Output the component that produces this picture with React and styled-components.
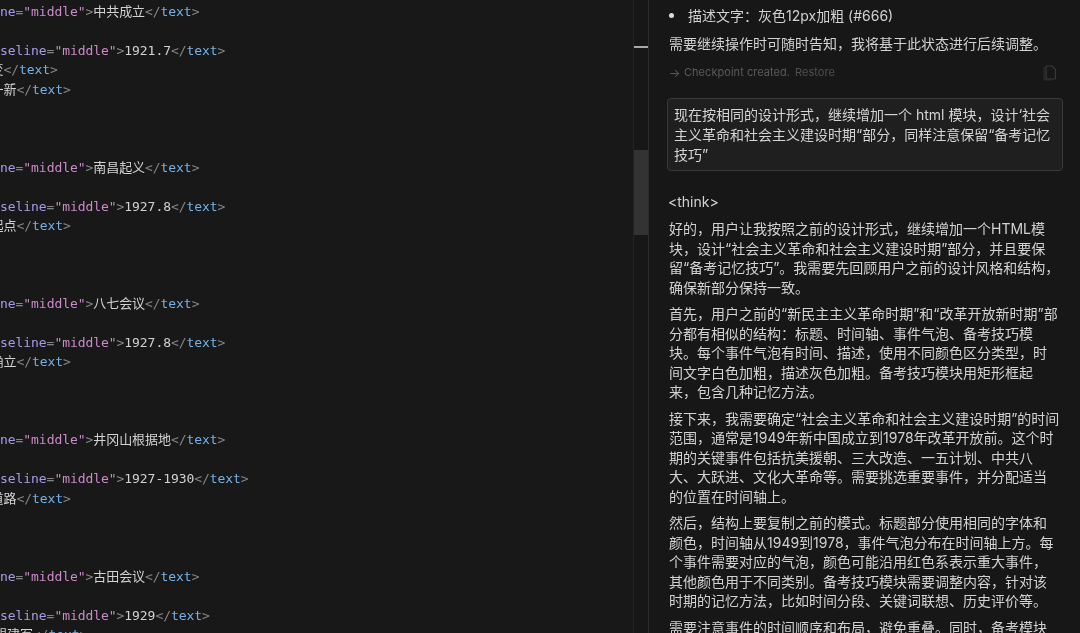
import React from 'react';
import styled, { createGlobalStyle } from 'styled-components';

const GlobalStyle = createGlobalStyle`
html, body {
  margin:0;
  padding:0;
  background:#181818;
  overflow:hidden;
}
`;

const Page = styled.div`
display:flex;
width:1080px;
height:633px;
overflow:hidden;
background:#181818;
filter:blur(0.3px);
`;

const CodePane = styled.div`
width:633px;
height:633px;
flex-shrink:0;
overflow:hidden;
padding-top:2px;
box-sizing:border-box;
font-family:"DejaVu Sans Mono","Noto Sans CJK SC",monospace;
font-size:13px;
letter-spacing:-0.06px;
line-height:19.47px;
color:#d2d2d2;
`;

const CodeLine = styled.div`
height:19.47px;
white-space:pre;
margin-left:${props => props.$clip || 0}px;
`;

const Attr = styled.span`
color:#a59ce6;
`;

const Str = styled.span`
color:#cb8ac8;
`;

const Punct = styled.span`
color:#858585;
`;

const Tag = styled.span`
color:#74b0e6;
`;

const Scrollbar = styled.div`
position:relative;
width:14px;
height:633px;
flex-shrink:0;
background:#171717;
border-left:1px solid #232323;
border-right:1px solid #2b2b2b;
`;

const Thumb = styled.div`
position:absolute;
top:150px;
left:0;
right:0;
height:85px;
background:#333;
`;

const Tick = styled.div`
position:absolute;
top:46px;
left:0;
right:0;
height:2px;
background:#a8a8a8;
`;

const ChatPane = styled.div`
flex:1;
height:633px;
overflow:hidden;
box-sizing:border-box;
padding:5.5px 17px 0 20px;
background:#171717;
font-family:Inter,"Noto Sans CJK SC",sans-serif;
font-size:14px;
line-height:19.5px;
color:#d2d2d2;
`;

const Bullet = styled.div`
display:flex;
align-items:center;
white-space:nowrap;
&::before{
  content:"";
  width:5px;
  height:5px;
  margin:0 14px 0 0;
  border-radius:50%;
  background:#dcdcdc;
}
`;

const Para = styled.p`
margin:0 0 7px;
`;

const Closing = styled(Para)`
margin:9px 0 0;
`;

const TextLine = styled.span`
display:block;
white-space:nowrap;
`;

const Checkpoint = styled.div`
display:flex;
align-items:center;
height:20px;
margin:9px 6px 0 0;
font-size:11px;
letter-spacing:0.04px;
color:#5a5a5a;
`;

const Arrow = styled.span`
width:15px;
font-size:12px;
`;

const Restore = styled.span`
margin-left:5px;
color:#505050;
`;

const CopyIcon = styled.svg`
margin-left:auto;
width:15px;
height:16px;
fill:none;
stroke:#3a3a3a;
stroke-width:1.2;
`;

const UserBox = styled.div`
margin:15px 0 21px -2px;
padding:6px 6px 5px 6px;
background:#1f1f1f;
border:1px solid #3a3a3a;
border-radius:4px;
line-height:20px;
color:#d4d4d4;
`;

const Think = styled.div`
margin:0 0 8px -1px;
`;

const codeRows = [
    { row: 0, kind: 'attr', head: 'ne', value: '中共成立' },
    { row: 2, kind: 'attr', head: 'seline', value: '1921.7' },
    { row: 3, kind: 'tail', clip: -9.5, value: '变' },
    { row: 4, kind: 'tail', clip: -9.5, value: '一新' },
    { row: 8, kind: 'attr', head: 'ne', value: '南昌起义' },
    { row: 10, kind: 'attr', head: 'seline', value: '1927.8' },
    { row: 11, kind: 'tail', clip: -9.5, value: '起点' },
    { row: 15, kind: 'attr', head: 'ne', value: '八七会议' },
    { row: 17, kind: 'attr', head: 'seline', value: '1927.8' },
    { row: 18, kind: 'tail', clip: -9.5, value: '确立' },
    { row: 22, kind: 'attr', head: 'ne', value: '井冈山根据地' },
    { row: 24, kind: 'attr', head: 'seline', value: '1927-1930' },
    { row: 25, kind: 'tail', clip: -9.5, value: '道路' },
    { row: 29, kind: 'attr', head: 'ne', value: '古田会议' },
    { row: 31, kind: 'attr', head: 'seline', value: '1929' },
    { row: 32, kind: 'tail', clip: -6, value: '想建军' },
];

const thinking = [
    [
        '好的，用户让我按照之前的设计形式，继续增加一个HTML模',
        '块，设计“社会主义革命和社会主义建设时期”部分，并且要保',
        '留“备考记忆技巧”。我需要先回顾用户之前的设计风格和结构，',
        '确保新部分保持一致。',
    ],
    [
        '首先，用户之前的“新民主主义革命时期”和“改革开放新时期”部',
        '分都有相似的结构：标题、时间轴、事件气泡、备考技巧模',
        '块。每个事件气泡有时间、描述，使用不同颜色区分类型，时',
        '间文字白色加粗，描述灰色加粗。备考技巧模块用矩形框起',
        '来，包含几种记忆方法。',
    ],
    [
        '接下来，我需要确定“社会主义革命和社会主义建设时期”的时间',
        '范围，通常是1949年新中国成立到1978年改革开放前。这个时',
        '期的关键事件包括抗美援朝、三大改造、一五计划、中共八',
        '大、大跃进、文化大革命等。需要挑选重要事件，并分配适当',
        '的位置在时间轴上。',
    ],
    [
        '然后，结构上要复制之前的模式。标题部分使用相同的字体和',
        '颜色，时间轴从1949到1978，事件气泡分布在时间轴上方。每',
        '个事件需要对应的气泡，颜色可能沿用红色系表示重大事件，',
        '其他颜色用于不同类别。备考技巧模块需要调整内容，针对该',
        '时期的记忆方法，比如时间分段、关键词联想、历史评价等。',
    ],
    ['需要注意事件的时间顺序和布局，避免重叠。同时，备考模块'],
];

const userLines = [
    '现在按相同的设计形式，继续增加一个 html 模块，设计‘社会',
    '主义革命和社会主义建设时期“部分，同样注意保留“备考记忆',
    '技巧”',
];

const CloseTag = () => (
    <>
        <Punct>{'</'}</Punct>
        <Tag>text</Tag>
        <Punct>{'>'}</Punct>
    </>
);

const CodeRow = ({ line }) => {
    if (!line) return <CodeLine> </CodeLine>;
    if (line.kind === 'tail') {
        return (
            <CodeLine $clip={line.clip}>
                {line.value}
                <CloseTag />
            </CodeLine>
        );
    }
    return (
        <CodeLine>
            <Attr>{line.head}</Attr>
            <Punct>=</Punct>
            <Str>"middle"</Str>
            <Punct>{'>'}</Punct>
            {line.value}
            <CloseTag />
        </CodeLine>
    );
};

const App = () => {
    const rows = Array.from({ length: 33 }, (_, i) => codeRows.find(l => l.row === i));
    return (
        <Page lang="zh-CN">
            <GlobalStyle />
            <CodePane>
                {rows.map((line, i) => <CodeRow key={i} line={line} />)}
            </CodePane>
            <Scrollbar>
                <Tick />
                <Thumb />
            </Scrollbar>
            <ChatPane>
                <Bullet>描述文字：灰色12px加粗 (#666)</Bullet>
                <Closing>需要继续操作时可随时告知，我将基于此状态进行后续调整。</Closing>
                <Checkpoint>
                    <Arrow>→</Arrow>
                    Checkpoint created.
                    <Restore>Restore</Restore>
                    <CopyIcon viewBox="0 1 15 16">
                        <path d="M5 2h5l3.500 3.500V14a1 1 0 0 1-1 1H5a1 1 0 0 1-1-1V3a1 1 0 0 1 1-1z" />
                        <path d="M4 3.500H3a1 1 0 0 0-1 1V14a2 2 0 0 0 2 2h6" opacity="0.6" />
                    </CopyIcon>
                </Checkpoint>
                <UserBox>
                    {userLines.map(line => <TextLine key={line}>{line}</TextLine>)}
                </UserBox>
                <Think>{'<think>'}</Think>
                {thinking.map((para, i) => (
                    <Para key={i}>
                        {para.map(line => <TextLine key={line}>{line}</TextLine>)}
                    </Para>
                ))}
            </ChatPane>
        </Page>
    );
};

export default App;
